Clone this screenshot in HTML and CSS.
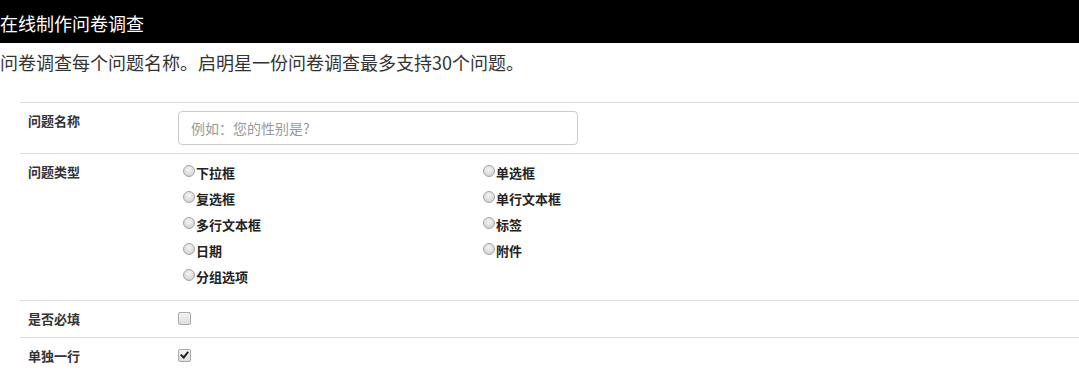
FILE: index.html
```html
<!DOCTYPE html>
<html lang="zh-CN">
<head>
    <meta charset="UTF-8">
    <meta name="viewport" content="width=device-width, initial-scale=1.0">
    <title>在线制作问卷调查</title>
    <link rel="stylesheet" href="styles.css">
</head>
<body>
    <div class="header">在线制作问卷调查</div>
    <p class="intro">问卷调查每个问题名称。启明星一份问卷调查最多支持30个问题。</p>

    <table class="form-table">
        <tr>
            <td class="field-name">问题名称</td>
            <td><input type="text" class="text-input" placeholder="例如：您的性别是?"></td>
        </tr>
        <tr>
            <td class="field-name">问题类型</td>
            <td>
                <div class="type-list">
                    <label class="type-option"><input type="radio" name="qtype" value="select">下拉框</label>
                    <label class="type-option"><input type="radio" name="qtype" value="radio">单选框</label>
                    <label class="type-option"><input type="radio" name="qtype" value="checkbox">复选框</label>
                    <label class="type-option"><input type="radio" name="qtype" value="text">单行文本框</label>
                    <label class="type-option"><input type="radio" name="qtype" value="textarea">多行文本框</label>
                    <label class="type-option"><input type="radio" name="qtype" value="label">标签</label>
                    <label class="type-option"><input type="radio" name="qtype" value="date">日期</label>
                    <label class="type-option"><input type="radio" name="qtype" value="file">附件</label>
                    <label class="type-option"><input type="radio" name="qtype" value="group">分组选项</label>
                </div>
            </td>
        </tr>
        <tr>
            <td class="field-name">是否必填</td>
            <td><input type="checkbox" class="check" id="required"></td>
        </tr>
        <tr>
            <td class="field-name">单独一行</td>
            <td><input type="checkbox" class="check" id="singleLine" checked></td>
        </tr>
    </table>
</body>
</html>
```

FILE: styles.css
```css
body {
    margin: 0;
    font-family: "Noto Sans CJK SC", "Liberation Sans", sans-serif;
    color: #333;
    background: #fff;
}

.header {
    height: 43px;
    box-sizing: border-box;
    padding-top: 3px;
    display: flex;
    align-items: center;
    background: #000;
    color: #fff;
    font-size: 18px;
}

.intro {
    margin: 7px 0 28px;
    font-size: 18px;
    line-height: 24px;
    color: #333;
}

.form-table {
    margin-left: 20px;
    width: calc(100% - 20px);
    border-collapse: collapse;
}

.form-table td {
    border-top: 1px solid #ddd;
    padding: 8px;
    vertical-align: top;
    font-size: 13px;
    line-height: 20px;
}

.field-name {
    width: 134px;
    font-weight: bold;
    color: #333;
}

.text-input {
    display: block;
    width: 400px;
    height: 34px;
    box-sizing: border-box;
    margin: 0;
    padding: 6px 12px;
    border: 1px solid #ccc;
    border-radius: 4px;
    font-family: inherit;
    font-size: 14px;
    color: #555;
}

.text-input::placeholder {
    color: #999;
}

.type-list {
    display: grid;
    grid-template-columns: 300px 300px;
    margin-top: -2px;
    padding-bottom: 2px;
}

.type-option {
    display: flex;
    align-items: center;
    height: 26px;
    font-weight: bold;
    color: #222;
}

.type-option input[type="radio"] {
    appearance: none;
    -webkit-appearance: none;
    width: 12px;
    height: 12px;
    margin: -4px 1px 0 5px;
    border: 1px solid #a6a6a6;
    border-radius: 50%;
    box-sizing: border-box;
    background: radial-gradient(circle at 50% 35%, #f4f4f4 0%, #dcdcdc 60%, #c8c8c8 100%);
}

.check {
    appearance: none;
    -webkit-appearance: none;
    position: relative;
    display: block;
    width: 13px;
    height: 13px;
    margin: 3px 0 0;
    border: 1px solid #a9a9a9;
    border-radius: 2px;
    box-sizing: border-box;
    background: linear-gradient(#f3f3f3, #dedede);
}

.check:checked::after {
    content: "";
    position: absolute;
    left: 3px;
    top: 0;
    width: 3px;
    height: 6px;
    border-right: 2px solid #222;
    border-bottom: 2px solid #222;
    transform: rotate(40deg);
}
```
